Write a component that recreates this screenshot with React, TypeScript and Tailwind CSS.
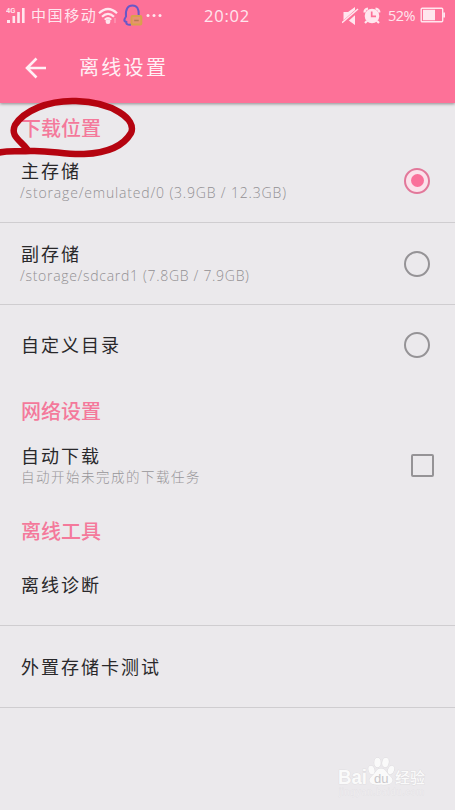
import type { ReactNode } from "react";

const hand = "font-['Inter','Noto_Sans_CJK_SC',sans-serif]";
const latin = "font-['Open_Sans','Noto_Sans_CJK_SC',sans-serif]";

function StatusBar() {
  return (
    <div className="flex h-8 items-center text-[#ffe6ee]">
      <svg className="ml-1.5 h-8 w-[22px] shrink-0" viewBox="0 0 22 32" fill="currentColor">
        <text x="0" y="13" fontSize="7.5" fontWeight="600" fontFamily="Roboto, sans-serif">4G</text>
        <rect x="1" y="20" width="3" height="3" />
        <rect x="6.500" y="16" width="2.6" height="7" />
        <rect x="11.200" y="12" width="2.6" height="11" />
        <rect x="16" y="8" width="2.6" height="15" />
      </svg>
      <span className={`${hand} ml-[3px] w-[67px] shrink-0 text-[15px] leading-8 tracking-[1.6px] whitespace-nowrap`}>中国移动</span>
      <svg className="h-8 w-[20px] shrink-0" viewBox="0 0 20 32" fill="none" stroke="currentColor" strokeWidth="2.200">
        <path d="M1 13.2Q10 4.800 19 13.200M4 16.800Q10 11 16 16.800M6.800 19.800Q10 16.600 13.200 19.800" />
        <circle cx="10" cy="21.700" r="2.400" fill="currentColor" stroke="none" />
        <path d="M17 18v5" strokeWidth="1" opacity=".5" />
      </svg>
      <svg className="ml-[4px] h-8 w-[22px] shrink-0" viewBox="0 0 22 32" fill="none">
        <path d="M4.500 21C3.500 24.500 6 25 9 24.500M4.500 21C2 22.500 1.500 20 4 16.500C3.300 9 5.800 5.500 10.500 5.500S17 9 16.700 15" stroke="#6858c8" strokeWidth="2" />
        <rect x="9.500" y="16" width="9.800" height="8.500" rx="1" fill="#e8926f" stroke="#d9a04c" strokeWidth="2" />
        <path d="M12.200 20.500h4.500" stroke="#b77a50" strokeWidth="1.500" />
      </svg>
      <svg className="ml-[1px] h-8 w-[18px] shrink-0" viewBox="0 0 18 32" fill="currentColor">
        <circle cx="3" cy="15.500" r="1.500" /><circle cx="9" cy="15.500" r="1.500" /><circle cx="15" cy="15.500" r="1.500" />
      </svg>
      <span className={`${latin} ml-[41px] w-[45px] shrink-0 text-[16.5px] leading-[34px] tracking-[.8px]`}>20:02</span>
      <svg className="ml-[93px] h-8 w-[18px] shrink-0" viewBox="0 0 18 32">
        <path d="M1.500 12H6l7-5v18l-7-5H1.500z" fill="currentColor" />
        <path d="M0 24L16 10" stroke="#fd7198" strokeWidth="3.800" />
        <path d="M0 22.700L16 9" stroke="currentColor" strokeWidth="1.500" />
      </svg>
      <svg className="ml-[3px] h-8 w-[18px] shrink-0" viewBox="0 0 18 32">
        <path d="M1.500 12.500Q1.500 9 5 8.500M12.500 8.500Q16 9 16.500 12.500M4 21l-2 2M14 21l2 2" stroke="currentColor" strokeWidth="2.200" fill="none" />
        <circle cx="9" cy="16" r="7.300" fill="currentColor" />
        <path d="M8.700 11.500V16.300H13" stroke="#fd7198" strokeWidth="1.700" fill="none" />
      </svg>
      <span className={`${latin} ml-[7px] w-[28px] shrink-0 text-[14.5px] leading-8 tracking-[-.6px]`}>52%</span>
      <svg className="ml-[4px] h-8 w-[26px] shrink-0" viewBox="0 0 26 32">
        <rect x="1.200" y="8.200" width="21.500" height="13.600" rx="1" stroke="currentColor" strokeWidth="1.400" fill="none" />
        <path d="M3 9.700h12v10.600h-12zM23.200 12.500H25v5h-1.800z" fill="currentColor" />
      </svg>
    </div>
  );
}

function SectionTitle({ children, className }: { children: ReactNode; className: string }) {
  return (
    <h2 className={`flex items-center pl-[21px] font-['Noto_Sans_CJK_SC',sans-serif] text-[20px] font-medium text-[#f4799b] ${className}`}>
      {children}
    </h2>
  );
}

function Radio({ checked = false }: { checked?: boolean }) {
  return (
    <span className={`mr-[25px] flex size-[26px] shrink-0 items-center justify-center rounded-full ${checked ? "border-2 border-[#e2789a] bg-[#fbe1ea]" : "border-[2.5px] border-[#959396]"}`}>
      {checked && <span className="size-[13px] rounded-full bg-[#fa709a]" />}
    </span>
  );
}

function Row({ title, detail, control, className }: { title: string; detail?: ReactNode; control?: ReactNode; className: string }) {
  return (
    <div className={`flex items-center justify-between ${className}`}>
      <div className="pt-[2px] pl-[21px]">
        <div className={`${hand} text-[18px] leading-[22px] tracking-[2px] text-[#29282a]`}>{title}</div>
        {detail}
      </div>
      {control}
    </div>
  );
}

function Watermark() {
  return (
    <svg className="absolute top-[750px] left-[335px] h-[52px] w-[100px]" viewBox="0 0 100 52" fill="#fafafa" stroke="#d9d7da" strokeWidth=".7">
      <g fontFamily="'Liberation Sans', 'Noto Sans CJK SC', sans-serif" paintOrder="stroke">
        <text x="3" y="34" fontSize="20" textLength="29" lengthAdjust="spacingAndGlyphs" fontWeight="bold">Bai</text>
        <ellipse cx="36.500" cy="20" rx="3" ry="4.400" transform="rotate(-15 36.500 20)" />
        <ellipse cx="42.500" cy="12.500" rx="3.200" ry="4.800" />
        <ellipse cx="50.500" cy="12.500" rx="3.200" ry="4.800" transform="rotate(12 50.500 12.500)" />
        <ellipse cx="56" cy="20" rx="3" ry="4.400" transform="rotate(20 56 20)" />
        <path d="M46 18.500C41 18.500 41 23 37 26C31 31 36 36 46 34.500C56 36 61 31 55 26C51 23 51 18.500 46 18.500Z" />
        <text x="39" y="33" fontSize="13" fill="#c9c7ca" stroke="none">du</text>
        <text x="60" y="33" fontSize="15" fontWeight="500" textLength="30">经验</text>
        <text x="4" y="45" fontSize="9" fill="#f0eef1" strokeWidth=".3" textLength="85">jingyan.baidu.com</text>
      </g>
    </svg>
  );
}

export default function App() {
  const detail = `${latin} ml-[-1px] text-[14px] leading-[20px] font-light whitespace-nowrap text-[#929093]`;
  return (
    <main className="relative h-[810px] w-[455px] overflow-hidden bg-[#ebe9ec]">
      <header className="relative h-[103px] bg-[#fd7198] shadow-[0_1px_3px_rgba(0,0,0,.4)]">
        <StatusBar />
        <div className="flex h-[71px] items-center text-[#fff0f5]">
          <svg className="ml-[25px] size-[22px]" viewBox="0 0 22 22" fill="none" stroke="currentColor" strokeWidth="2.600">
            <path d="M21 11H2.500M11.500 1.500L2 11l9.500 9.500" />
          </svg>
          <h1 className={`${hand} ml-8 text-[20px] tracking-[2.3px]`}>离线设置</h1>
        </div>
      </header>
      <SectionTitle className="h-[47px] pt-[3px]">下载位置</SectionTitle>
      <Row title="主存储" className="h-[73px] border-b border-[#cfcdd0] pb-[11px]"
        detail={<div className={`${detail} tracking-[.83px]`}>/storage/emulated/0 (3.9GB / 12.3GB)</div>} control={<Radio checked />} />
      <Row title="副存储" className="h-[82px] border-b border-[#cfcdd0]"
        detail={<div className={`${detail} tracking-[.7px]`}>/storage/sdcard1 (7.8GB / 7.9GB)</div>} control={<Radio />} />
      <Row title="自定义目录" className="h-[80px]" control={<Radio />} />
      <SectionTitle className="h-[52px]">网络设置</SectionTitle>
      <Row title="自动下载" className="h-[56px]"
        detail={<div className={`${hand} text-[13.5px] leading-[19px] font-light tracking-[1.500px] text-[#979598]`}>自动开始未完成的下载任务</div>}
        control={<span className="mr-[21px] size-[23px] shrink-0 rounded-[2px] border-2 border-[#959396]" />} />
      <SectionTitle className="h-[76px]">离线工具</SectionTitle>
      <Row title="离线诊断" className="h-[57px] border-b border-[#cfcdd0] pb-[24px]" />
      <Row title="外置存储卡测试" className="h-[82px] border-b border-[#cfcdd0]" />
      <svg className="absolute top-[92px] left-0 h-[68px] w-[140px]" viewBox="0 0 140 68" fill="none" stroke="#b50410" strokeLinecap="round" strokeLinejoin="round">
        <path d="M-3 61C8 58 17 60 30 59C50 58 65 63 84 62C108 61 124 53 131 41C137 27 112 10 76 9C48 8 24 19 15 33C10 44 20 48 27 57" strokeWidth="6.500" />
      </svg>
      <Watermark />
    </main>
  );
}
